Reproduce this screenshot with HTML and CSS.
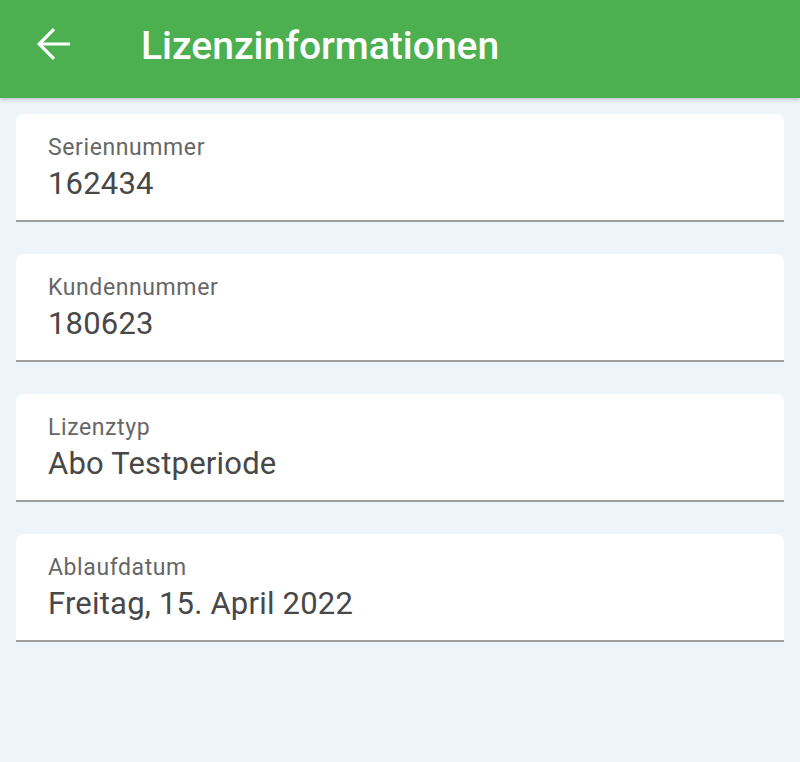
FILE: index.html
```html
<!DOCTYPE html>
<html lang="de">
<head>
<meta charset="utf-8">
<link rel="stylesheet" href="styles.css">
</head>
<body>
<header class="appbar">
  <svg class="back" viewBox="0 0 24 24" width="48" height="48"><path d="M20 12H5.2M12 4.6L4.6 12l7.4 7.4" fill="none" stroke="#fff" stroke-width="1.6"/></svg>
  <h1 class="title">Lizenzinformationen</h1>
</header>
<main class="content">
  <section class="field">
    <div class="label">Seriennummer</div>
    <div class="value">162434</div>
  </section>
  <section class="field">
    <div class="label">Kundennummer</div>
    <div class="value">180623</div>
  </section>
  <section class="field">
    <div class="label">Lizenztyp</div>
    <div class="value">Abo Testperiode</div>
  </section>
  <section class="field">
    <div class="label">Ablaufdatum</div>
    <div class="value">Freitag, 15. April 2022</div>
  </section>
</main>
</body>
</html>
```
FILE: styles.css
```css
html, body { margin: 0; padding: 0; }
body {
  width: 800px;
  height: 762px;
  background: #eef4f8;
  font-family: Roboto, "Noto Sans", sans-serif;
  overflow: hidden;
}
.appbar {
  height: 98px;
  background: #4caf50;
  display: flex;
  align-items: flex-start;
  padding-left: 30px;
  box-shadow: 0 2px 4px rgba(0,0,0,0.18);
  position: relative;
}
.back { display: block; margin-top: 20px; flex: none; }
.title {
  margin: 22px 0 0 63px;
  color: #fff;
  font-size: 39px;
  line-height: 48px;
  font-weight: 500;
}
.content {
  padding: 16px 16px;
  display: flex;
  flex-direction: column;
  gap: 32px;
}
.field {
  background: #fff;
  border-radius: 8px 8px 0 0;
  border-bottom: 2px solid #9e9e9e;
  height: 106px;
  box-sizing: content-box;
  padding: 0 32px;
}
.label {
  padding-top: 20px;
  font-size: 23px;
  color: #666;
  letter-spacing: 0.6px;
  line-height: 28px;
}
.value {
  font-size: 31px;
  color: #484848;
  line-height: 36px;
  margin-top: 4px;
  letter-spacing: 0.2px;
}
```
